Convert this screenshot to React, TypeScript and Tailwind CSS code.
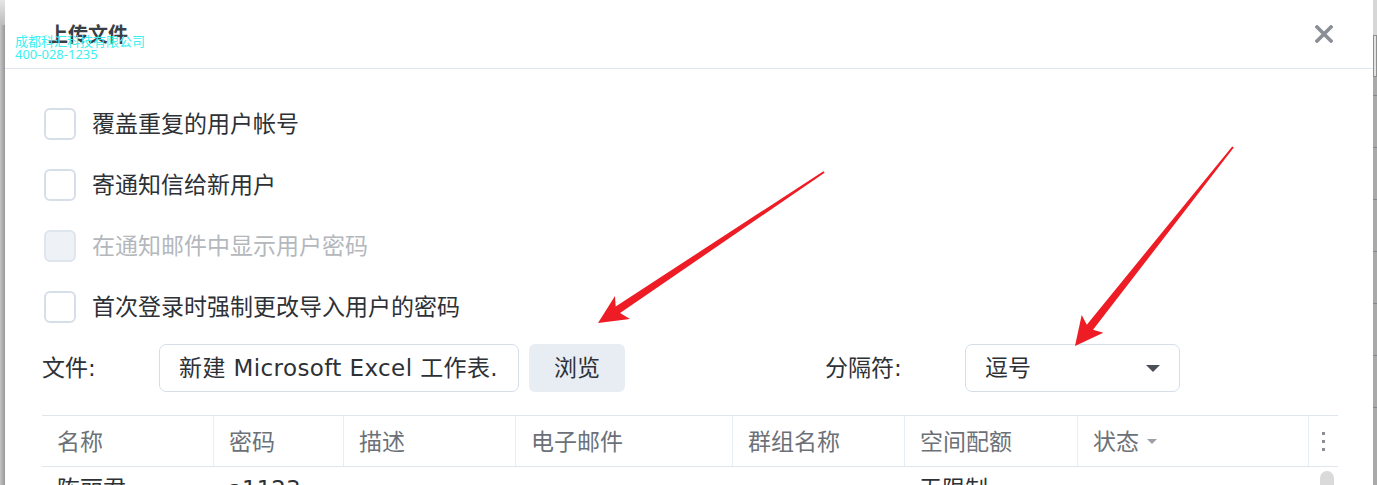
import React from "react";

const font = { fontFamily: '"DejaVu Sans", "Noto Sans CJK SC", sans-serif' };

function Checkbox({ label, disabled }: { label: string; disabled?: boolean }) {
  return (
    <div className="flex h-[61px] items-center">
      <div
        className={
          "h-[32px] w-[32px] rounded-[6px] border-2 " +
          (disabled ? "border-[#dfe5ec] bg-[#eef2f7]" : "border-[#d6dee8] bg-white")
        }
      />
      <span className={"ml-[16px] mt-[2px] text-[23px] leading-none " + (disabled ? "text-[#b4b8bd]" : "text-[#2d3136]")}>
        {label}
      </span>
    </div>
  );
}

const cols: { label: string; w: number; caret?: boolean }[] = [
  { label: "名称", w: 171 },
  { label: "密码", w: 130 },
  { label: "描述", w: 172 },
  { label: "电子邮件", w: 217 },
  { label: "群组名称", w: 172 },
  { label: "空间配额", w: 173 },
  { label: "状态", w: 231, caret: true },
];

const row = ["陈丽君", "a1123", "", "", "", "无限制", ""];

export default function App() {
  return (
    <div className="relative flex h-[485px] w-[1377px] overflow-hidden bg-white" style={font}>
      {/* left frame strip */}
      <div className="flex w-[5px] flex-col">
        <div className="h-[25px] bg-gradient-to-b from-[#e6e6e6] to-[#bdbdbd]" />
        <div className="flex-1 bg-gradient-to-r from-[#c4c4c4] to-[#989898]" />
      </div>

      {/* dialog */}
      <div className="relative flex flex-1 flex-col bg-white">
        {/* header */}
        <div className="flex h-[69px] shrink-0 items-center justify-between border-b border-[#dfe6ee] pl-[43px] pr-[40px]">
          <span className="text-[20px] font-bold text-[#3a3f45] leading-none" style={{ fontFamily: '"Noto Sans CJK SC", sans-serif' }}>上传文件</span>
          <svg width="18" height="18" viewBox="0 0 18 18">
            <path d="M2 2 L16 16 M16 2 L2 16" stroke="#8a8f96" strokeWidth="3.6" strokeLinecap="square" />
          </svg>
        </div>

        {/* body */}
        <div className="flex flex-col pl-[39px] pt-[24px]">
          <Checkbox label="覆盖重复的用户帐号" />
          <Checkbox label="寄通知信给新用户" />
          <Checkbox label="在通知邮件中显示用户密码" disabled />
          <Checkbox label="首次登录时强制更改导入用户的密码" />
        </div>

        {/* file row */}
        <div className="mt-[7px] flex h-[48px] items-center pl-[37px]">
          <span className="w-[117px] text-[23px] text-[#2d3136]">文件:</span>
          <div className="flex h-[48px] w-[360px] items-center rounded-[7px] border border-[#d6dee8] pl-[19px] text-[23px] tracking-[0.4px] text-[#2d3136] whitespace-nowrap overflow-hidden">
            新建 Microsoft Excel 工作表.
          </div>
          <div className="ml-[10px] flex h-[48px] w-[96px] items-center justify-center rounded-[6px] bg-[#e8edf4] text-[23px] text-[#2d3136]">
            浏览
          </div>
          <div className="w-[200px]" />
          <span className="w-[140px] text-[23px] text-[#2d3136]">分隔符:</span>
          <div className="flex h-[48px] w-[215px] items-center justify-between rounded-[7px] border border-[#d6dee8] pl-[19px] pr-[19px] text-[23px] text-[#2d3136]">
            <span>逗号</span>
            <svg width="14" height="7" viewBox="0 0 14 7">
              <path d="M0 0 L14 0 L7 7 Z" fill="#4a4f57" />
            </svg>
          </div>
        </div>

        {/* table */}
        <div className="ml-[37px] mr-[35px] mt-[23px] flex flex-col">
          <div className="flex h-[52px] border-y border-[#dfe6ee]">
            {cols.map((c, i) => (
              <div
                key={c.label}
                className={"flex items-center pl-[15px] " + (i > 0 ? "border-l border-[#e8edf2]" : "")}
                style={{ width: c.w }}
              >
                <span className="mt-[2px] text-[23px] text-[#6c7178] leading-none">{c.label}</span>
                {c.caret && (
                  <svg className="ml-[8px]" width="10" height="5" viewBox="0 0 10 5">
                    <path d="M0 0 L10 0 L5 5 Z" fill="#9aa0a6" />
                  </svg>
                )}
              </div>
            ))}
            <div className="flex flex-1 items-center justify-center border-l border-[#e8edf2]">
              <div className="flex flex-col gap-[5px]">
                <div className="h-[3px] w-[3px] bg-[#8a8f96]" />
                <div className="h-[3px] w-[3px] bg-[#8a8f96]" />
                <div className="h-[3px] w-[3px] bg-[#8a8f96]" />
              </div>
            </div>
          </div>
          <div className="relative flex h-[50px]">
            {cols.map((c, i) => (
              <div key={c.label} className="pl-[15px] pt-[11px]" style={{ width: c.w }}>
                <span className="text-[23px] text-[#2d3136] leading-none">{row[i]}</span>
              </div>
            ))}
            <div className="absolute right-[4px] top-[4px] h-[40px] w-[14px] rounded-[7px] bg-[#dadada]" />
          </div>
        </div>

        {/* watermark */}
        <div className="absolute left-[10px] top-[35px] text-[13px] leading-[13px] text-[#3af0f0]" style={{ fontFamily: '"Noto Sans", "Noto Sans CJK SC", sans-serif' }}>
          <div>成都科汇科技有限公司</div>
          <div>400-028-1235</div>
        </div>
      </div>

      {/* right frame strip */}
      <div className="flex w-[4px] flex-col bg-[#a9a9a9]">
        <div className="h-[35px] bg-[#d6d6d6]" />
        <div className="h-[42px] border border-[#8f8f8f] bg-[#e2e2e2]" />
        <div className="mt-[18px] h-[1px] bg-[#7f8790]" />
        <div className="mt-[51px] h-[1px] bg-[#7f8790]" />
        <div className="mt-[51px] h-[1px] bg-[#7f8790]" />
        <div className="mt-[51px] h-[1px] bg-[#7f8790]" />
        <div className="mt-[51px] h-[1px] bg-[#7f8790]" />
        <div className="mt-[51px] h-[1px] bg-[#7f8790]" />
        <div className="mt-[51px] h-[1px] bg-[#7f8790]" />
      </div>

      {/* annotation arrows */}
      <svg className="pointer-events-none absolute left-0 top-0" width="1377" height="485" viewBox="0 0 1377 485">
        <polygon
          points="824.6,172.8 620.1,313.0 630,319 598,323 615,296 615.7,306.4 823.4,171.2"
          fill="#ee1c25"
        />
        <polygon
          points="1233.8,147.6 1093.0,329.7 1103.3,332.7 1075,346 1081.7,315 1086.8,324.7 1232.2,146.4"
          fill="#ee1c25"
        />
      </svg>
    </div>
  );
}
